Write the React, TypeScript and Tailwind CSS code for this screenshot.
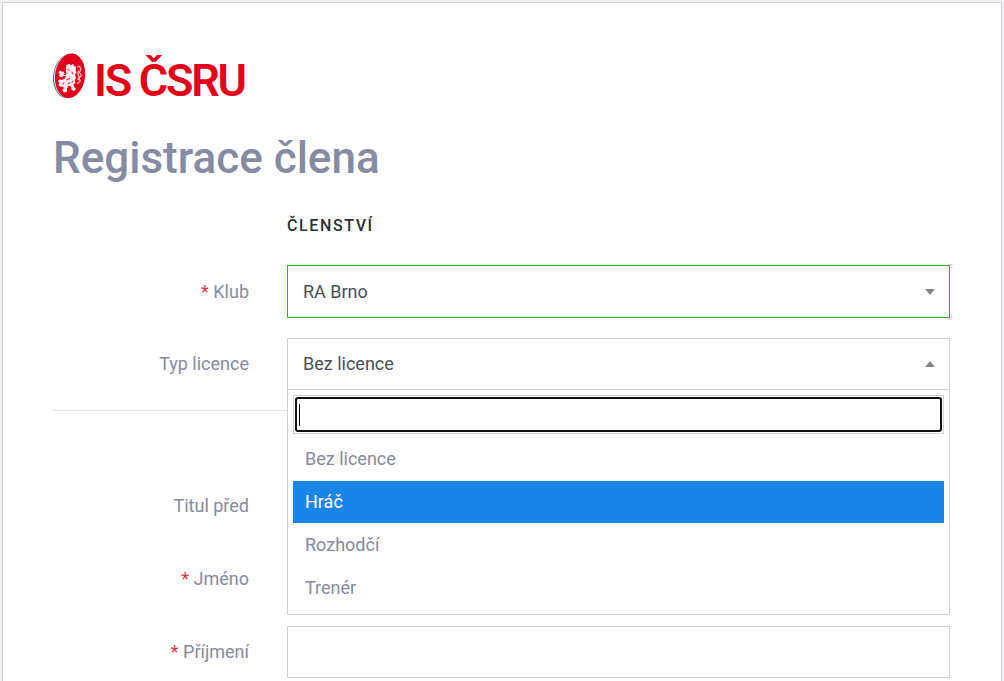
import { useState, type ReactNode } from "react";

const licences = ["Bez licence", "Hráč", "Rozhodčí", "Trenér"];

function Crest() {
  return (
    <svg viewBox="0 0 34 46" className="h-[46px] w-[34px]" aria-hidden="true">
      <g transform="rotate(7 17 23)">
        <ellipse cx="15.4" cy="23.4" rx="15.2" ry="22" fill="#2f5da8" />
        <ellipse cx="16.2" cy="23" rx="15.2" ry="22.2" fill="#dfe8f5" />
        <ellipse cx="17" cy="22.8" rx="15" ry="22.4" fill="#e2001a" />
      </g>
      <g transform="translate(-3.4 -2.8) scale(1.2)">
        <path
          d="M14 12.5l2.2-1.2 1.4 1.2 2-.9 1 1.7 1.6.8-.5 2.4.8 2.2-1.4 1.8.9 2.4-1 2.2.6 2.2-1.8 1.2.8 2.2 1.4 1.4-1.6 1.8-2-.6-.6-3-2.2-.6-1.2 2.4.3 2.6-2.6.6-1.4-1.5 1-2-.6-1.6-2.2.3-1.6-1.6 1-1.8-1.5-1.3 1.6-1.6 2 .7 2.2-1.3 1.2-1.8-2.4-.2-1.7 1.2-1.9-1.2.7-1.7-1.2-1.6 1.6-1.6 1.3 1.2 1.6-.2.6 1.8 2 .6-.8-2z"
          fill="#fff"
          opacity="0.92"
        />
        <path d="M23 28l2.6-2.2-1-2.6 2-2.2-1.8-2.4 1.4-2.6-1.2-2.6-2 .6M23.5 25l1-3-1-3 .8-2" fill="none" stroke="#fff" strokeWidth="1" opacity="0.75" />
        <path d="M15 16l1.6 1M17 23l-3 2M18.5 18l1 2M15 28l2-1M12 27l-1 1.6M18.5 27l1-1.4M11.5 20l2 .4" stroke="#e2001a" strokeWidth="0.8" />
      </g>
    </svg>
  );
}

function Arrow({ up = false }: { up?: boolean }) {
  return (
    <svg viewBox="0 0 10 6" className="h-1.5 w-2.5 fill-[#888888]" aria-hidden="true">
      {up ? <path d="M0 6L5 0l5 6z" /> : <path d="M0 0h10L5 6z" />}
    </svg>
  );
}

function Row({ id, label, required = false, children }: { id: string; label: string; required?: boolean; children: ReactNode }) {
  return (
    <div className="grid grid-cols-[196px_1fr] items-center gap-[38px]">
      <label htmlFor={id} className="text-right text-[#868aa2]">
        {required && <span className="text-[#dc3545]">* </span>}
        {label}
      </label>
      {children}
    </div>
  );
}

function LicencePicker() {
  const [open, setOpen] = useState(true);
  const [value, setValue] = useState("Bez licence");
  const [active, setActive] = useState("Hráč");
  const [query, setQuery] = useState("");
  const shown = licences.filter((l) => l.toLowerCase().includes(query.toLowerCase()));
  return (
    <div className="relative">
      <button
        id="licence"
        type="button"
        aria-haspopup="listbox"
        aria-expanded={open}
        onClick={() => setOpen(!open)}
        className="flex h-13 w-full items-center justify-between border border-[#ced0da] bg-white pr-3.5 pl-[15px] text-left text-[#495057]"
      >
        {value}
        <Arrow up={open} />
      </button>
      {open && (
        <div className="absolute inset-x-0 top-full z-10 -mt-px border border-[#ced0da] bg-white p-[5px]">
          <div className="relative border border-[#ced0da] p-px">
            <input
              type="text"
              aria-label="Hledat typ licence"
              value={query}
              onChange={(e) => setQuery(e.target.value)}
              className="block h-[35px] w-full rounded-[3px] border-2 border-[#101010] px-1 outline-none"
            />
            {query === "" && <span className="pointer-events-none absolute top-2 left-[5px] h-[22px] w-px bg-black" />}
          </div>
          <ul role="listbox" aria-label="Typ licence" className="mt-1 flex flex-col gap-px">
            {shown.map((l) => (
              <li
                key={l}
                role="option"
                aria-selected={l === value}
                onMouseEnter={() => setActive(l)}
                onClick={() => {
                  setValue(l);
                  setOpen(false);
                }}
                className={
                  l === active
                    ? "flex h-[42px] cursor-pointer items-center bg-[#1a84e7] px-3 text-white"
                    : "flex h-[42px] cursor-pointer items-center px-3 text-[#868aa2]"
                }
              >
                {l}
              </li>
            ))}
          </ul>
        </div>
      )}
    </div>
  );
}

const box = "h-13 w-full border border-[#ced0da] bg-white px-[15px] text-[#495057]";

export default function App() {
  return (
    <div className="min-h-screen bg-[#f1f1f3] p-0.5 font-['Roboto',sans-serif] text-lg">
      <main className="border border-[#ced0da] bg-white pt-[50px] pr-[51px] pb-12 pl-[50px]">
        <div className="flex items-start gap-[7px] text-[#e2001a]">
          <Crest />
          <span className="text-[45px] leading-[56px] font-semibold tracking-tighter">IS ČSRU</span>
        </div>
        <h1 className="mt-[22px] text-[44px] leading-[54px] font-medium text-[#868aa2]">Registrace člena</h1>
        <form className="mt-7">
          <h2 className="ml-[234px] text-base leading-[26px] font-medium tracking-widest text-[#2c3038] uppercase">Členství</h2>
          <div className="mt-[26px] flex flex-col gap-5">
            <Row id="club" label="Klub" required>
              <div className="relative">
                <select
                  id="club"
                  className="block h-[53px] w-full appearance-none border border-[#1fbf0f] bg-white px-[15px] text-[#495057]"
                >
                  <option>RA Brno</option>
                </select>
                <span className="pointer-events-none absolute inset-y-0 right-[15px] flex items-center">
                  <Arrow />
                </span>
              </div>
            </Row>
            <Row id="licence" label="Typ licence">
              <LicencePicker />
            </Row>
          </div>
          <hr className="mt-5 border-[#e4e4e8]" />
          <div className="mt-[69px] flex flex-col gap-[21px]">
            <Row id="title" label="Titul před">
              <input id="title" type="text" className={box} />
            </Row>
            <Row id="name" label="Jméno" required>
              <input id="name" type="text" className={box} />
            </Row>
            <Row id="surname" label="Příjmení" required>
              <input id="surname" type="text" className={box} />
            </Row>
          </div>
        </form>
      </main>
    </div>
  );
}
